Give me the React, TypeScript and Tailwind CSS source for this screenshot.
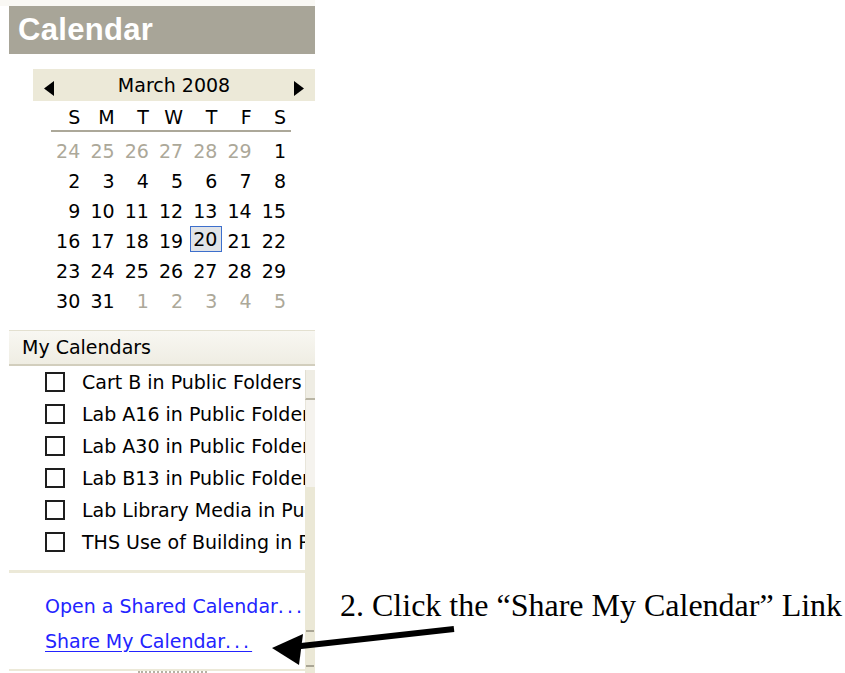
import React from "react";

type Day = { n: number; muted?: boolean; today?: boolean };

const weeks: Day[][] = [
  [{ n: 24, muted: true }, { n: 25, muted: true }, { n: 26, muted: true }, { n: 27, muted: true }, { n: 28, muted: true }, { n: 29, muted: true }, { n: 1 }],
  [2, 3, 4, 5, 6, 7, 8].map((n) => ({ n })),
  [9, 10, 11, 12, 13, 14, 15].map((n) => ({ n })),
  [16, 17, 18, 19, 20, 21, 22].map((n) => ({ n, today: n === 20 })),
  [23, 24, 25, 26, 27, 28, 29].map((n) => ({ n })),
  [{ n: 30 }, { n: 31 }, { n: 1, muted: true }, { n: 2, muted: true }, { n: 3, muted: true }, { n: 4, muted: true }, { n: 5, muted: true }],
];

const calendars = [
  "Cart B in Public Folders",
  "Lab A16 in Public Folders",
  "Lab A30 in Public Folders",
  "Lab B13 in Public Folders",
  "Lab Library Media in Public Folders",
  "THS Use of Building in Public Folders",
];

const weekdays = ["S", "M", "T", "W", "T", "F", "S"];

function Triangle({ dir }: { dir: "left" | "right" }) {
  return (
    <svg width="10" height="15" viewBox="0 0 10 15" className="mt-[6px]">
      {dir === "left" ? <polygon points="10,0 10,15 0,7.5" fill="#000" /> : <polygon points="0,0 0,15 10,7.5" fill="#000" />}
    </svg>
  );
}

function Dots() {
  return <span className="tracking-[3px]">...</span>;
}

export default function App() {
  return (
    <div className="relative w-[845px] h-[673px] bg-white overflow-hidden flex font-['DejaVu_Sans',Verdana,sans-serif] text-[19px] text-black">
      {/* Navigation pane */}
      <div className="w-[315px] h-full flex flex-col shrink-0">
        <div className="h-[8px] bg-[#f9f8f4]" />
        <div className="ml-[9px] flex flex-col flex-1">
          <div className="h-[48px] bg-[#a8a598] flex items-center pl-[9px] text-white font-bold text-[31px] font-['Liberation_Sans',Arial,sans-serif] tracking-[0.3px]">
            Calendar
          </div>

          {/* Month header */}
          <div className="mt-[15px] ml-[24px] h-[32px] bg-[#ece9d8] flex items-center justify-between px-[11px]">
            <Triangle dir="left" />
            <span className="leading-none">March 2008</span>
            <Triangle dir="right" />
          </div>

          {/* Weekday names */}
          <div className="mt-[5px] ml-[42px] w-[240px] grid grid-cols-7 h-[22px]">
            {weekdays.map((d, i) => (
              <div key={i} className="flex items-center justify-end pr-[5px] leading-none">
                {d}
              </div>
            ))}
          </div>
          <div className="ml-[42px] w-[240px] h-[2px] bg-[#aca899] mt-[2px]" />

          {/* Days */}
          <div className="mt-[4px] ml-[42px] w-[240px] grid grid-cols-7">
            {weeks.flat().map((d, i) =>
              d.today ? (
                <div key={i} className="h-[30px] flex items-start justify-end">
                  <div className="w-[32px] h-[26px] border border-[#3d6fcc] bg-[#e1e4e8] flex items-center justify-end pr-[4px] leading-none">
                    {d.n}
                  </div>
                </div>
              ) : (
                <div key={i} className={`h-[30px] flex items-center justify-end pr-[5px] leading-none ${d.muted ? "text-[#aca899]" : "text-black"}`}>
                  {d.n}
                </div>
              )
            )}
          </div>

          {/* My Calendars */}
          <div className="mt-[14px] h-[36px] border-t border-[#e3e0d0] border-b-2 border-b-[#d2cebd] bg-gradient-to-b from-[#f8f7f2] to-[#efede3] flex items-center pl-[13px]">
            My Calendars
          </div>

          <div className="flex flex-1">
            <div className="w-[296px] flex flex-col">
              {calendars.map((c) => (
                <div key={c} className="h-[32px] flex items-center overflow-hidden whitespace-nowrap">
                  <div className="ml-[36px] w-[20px] h-[20px] border-2 border-[#1e1e1e] bg-white shrink-0" />
                  <span className="ml-[17px] leading-none">{c}</span>
                </div>
              ))}
              <div className="mt-[12px] h-[3px] bg-[#ece9d8]" />
              <div className="mt-[18px] h-[30px] flex items-center pl-[36px] text-[#2323ff] whitespace-nowrap overflow-hidden">
                <span>
                  Open a Shared Calendar
                  <Dots />
                </span>
              </div>
              <div className="mt-[5px] h-[30px] flex items-center pl-[36px] text-[#2323ff] whitespace-nowrap">
                <span className="underline underline-offset-[3px]">
                  Share My Calendar
                  <Dots />
                </span>
              </div>
              <div className="mt-[13px] h-[2px] bg-[#ece9d8]" />
              <div className="ml-[129px] w-[69px] border-t-2 border-dotted border-[#b5b2a4]" />
            </div>

            {/* Scroll strip */}
            <div className="w-[10px] flex flex-col">
              <div className="mt-[4px] h-[30px] bg-[#efede4] border-l border-[#e2dfd2] border-b-2 border-b-[#b9b5a4]" />
              <div className="h-[87px] bg-[#f5f3ee] border-l border-[#e8e5da]" />
              <div className="flex-1 bg-[#ebe8d6] flex flex-col">
                <div className="mt-[143px] mx-[1px] h-[2px] bg-[#a9a594]" />
                <div className="mt-[33px] mx-[1px] h-[2px] bg-[#a9a594]" />
              </div>
            </div>
          </div>
        </div>
      </div>

      {/* Caption */}
      <div className="self-end mb-[50px] ml-[25px] font-['Liberation_Serif','Times_New_Roman',serif] text-[32px] leading-[36px] whitespace-nowrap">
        2. Click the “Share My Calendar” Link
      </div>

      {/* Pointer arrow */}
      <svg className="absolute inset-0 pointer-events-none" width="845" height="673" viewBox="0 0 845 673">
        <line x1="454" y1="629" x2="292" y2="647" stroke="#000" strokeWidth="6" />
        <polygon points="272,648 303,634 299,665" fill="#000" />
      </svg>
    </div>
  );
}
